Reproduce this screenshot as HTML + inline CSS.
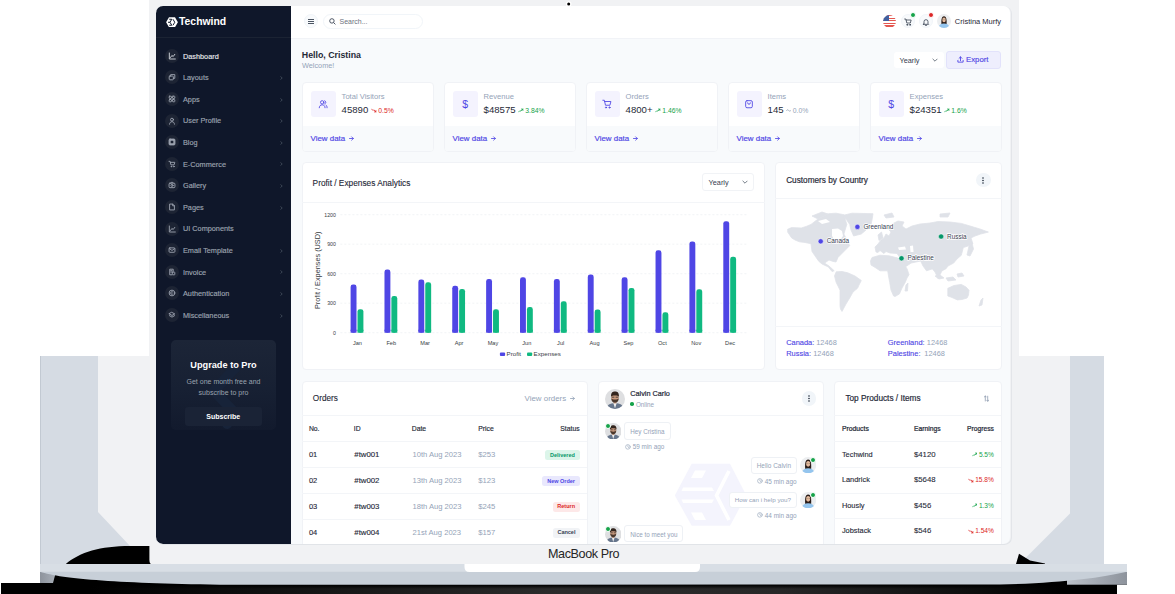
<!DOCTYPE html>
<html><head><meta charset="utf-8"><style>
*{box-sizing:border-box;margin:0;padding:0}
html,body{width:1175px;height:594px;overflow:hidden;background:#fff;font-family:"Liberation Sans",sans-serif}
.abs{position:absolute}
.t{white-space:nowrap}
svg{display:block}
#frame{position:absolute;left:0;top:0}
#screen{position:absolute;left:156px;top:6px;width:854px;height:538px;border-radius:7px;overflow:hidden;background:#f8fafc}
#edge{position:absolute;left:156px;top:6px;width:854.5px;height:538px;border-radius:7px;box-shadow:0.6px 0.7px 0 0.3px #e1e4e8;pointer-events:none}
#ct{position:absolute;left:-156px;top:-6px;width:1175px;height:594px}
.card{position:absolute;background:#fff;border:1px solid #f0f2f6;border-radius:4px;overflow:hidden}
.circ{position:absolute;border-radius:50%}
</style></head><body>
<svg id="frame" width="1175" height="594" viewBox="0 0 1175 594">
  <defs>
   <linearGradient id="gl" x1="0" x2="1" y1="0" y2="0"><stop offset="0" stop-color="#8d939c"/><stop offset="1" stop-color="#a9afb8"/></linearGradient>
   <linearGradient id="gr" x1="0" x2="1" y1="0" y2="0"><stop offset="0" stop-color="#bcc2ca"/><stop offset="0.5" stop-color="#a4aab3"/><stop offset="1" stop-color="#8d939c"/></linearGradient>
   <linearGradient id="gb" x1="0" x2="1" y1="0" y2="0"><stop offset="0.08" stop-color="#2a2a2a" stop-opacity="0"/><stop offset="0.5" stop-color="#2b2b2b"/><stop offset="0.7" stop-color="#272727"/><stop offset="0.95" stop-color="#2a2a2a" stop-opacity="0"/></linearGradient>
   <linearGradient id="gv" x1="0" x2="0" y1="0" y2="1"><stop offset="0" stop-color="#000"/><stop offset="1" stop-color="#000" stop-opacity="0"/></linearGradient>
  </defs>
  <rect x="40" y="356" width="1064" height="208" fill="#d5dbe3"/>
  <rect x="40" y="356" width="1" height="216" fill="#c2c9d2"/>
  <rect x="149" y="0" width="870" height="564" fill="#f1f2f4"/>
  <polygon points="98,356 1070,356 1070,513.5 1020,563.5 1016,564 149,564 149,546 130,546 98,512" fill="#f1f2f4"/>
  <path d="M130,546 L149.4,546 L149.4,560 Q149.6,564 151.3,564 L65.8,564 C80,552 100,546 130,546 Z" fill="#000"/>
  <polygon points="1016,564 1019,553.8 1030,560.5 1045,563.4 1045,564" fill="#000"/>
  <rect x="1" y="583" width="1116" height="11" fill="#000"/>
  <rect x="1" y="585" width="1116" height="9" fill="url(#gb)"/>
  <rect x="1" y="585" width="1116" height="4" fill="url(#gv)"/>
  <rect x="40" y="571" width="1087" height="13.7" fill="#000"/>
  <polygon points="40,571.7 56,571.7 53,583 40,583" fill="url(#gl)"/>
  <rect x="1067" y="571.7" width="60" height="13" fill="url(#gr)"/>
  <rect x="40" y="564" width="1087" height="8" fill="#d8dee5"/>
  <path d="M40,571.7 L1127,571.7 C1100,578 1060,583 1000,584.5 L230,584.7 C120,583.5 62,579 40,571.7 Z" fill="#c7cfd8"/>
  <path d="M464.5,564 L700,564 L700,567 Q700,572 695,572 L469.5,572 Q464.5,572 464.5,567 Z" fill="#fff"/>
  <circle cx="568.7" cy="4" r="2.8" fill="#fff"/><circle cx="568.7" cy="4" r="1.5" fill="#000"/>
  <text x="583.6" y="557.8" font-family="Liberation Sans" font-size="12.6" letter-spacing="-0.4" fill="#262626" text-anchor="middle">MacBook Pro</text>
</svg>
<div id="screen"><div id="ct"><div class="abs" style="left:156px;top:6px;width:135px;height:538px;background:#0f172a"></div>
<svg class="abs" style="left:165.5px;top:16.8px" width="12" height="10.5" viewBox="0 0 24 21">
<polygon points="6,0.5 18,0.5 23.8,10.5 18,20.5 6,20.5 0.2,10.5" fill="#fff"/>
<path d="M6.5 4.5h5L8 10.5l3.5 6h-5M14 4.5l3.5 6-3.5 6M4 10.5h4" stroke="#10182a" stroke-width="2" fill="none"/></svg>
<div class="abs t" style="left:179px;top:15.10px;line-height:13px;font-size:10.4px;color:#fff;font-weight:bold;">Techwind</div>
<div class="abs" style="left:156px;top:37px;width:135px;height:1px;background:#1b2333"></div>
<div class="circ" style="left:165.2px;top:48.8px;width:14px;height:14px;background:#1d2434"></div>
<svg class="abs" style="left:168.2px;top:51.8px" width="8" height="8" viewBox="0 0 12 12" fill="none" stroke="#d1d5db" color="#d1d5db" stroke-width="1.4" stroke-linecap="round" stroke-linejoin="round"><path d="M2 1.5v9h9"/><path d="M3.8 8.2l2-3 2 1.6 2.4-3.3"/></svg>
<div class="abs t" style="left:183px;top:50.60px;line-height:12px;font-size:7.3px;color:#e5e7eb;-webkit-text-stroke:0.15px #e5e7eb;">Dashboard</div>
<div class="circ" style="left:165.2px;top:70.4px;width:14px;height:14px;background:#1d2434"></div>
<svg class="abs" style="left:168.2px;top:73.4px" width="8" height="8" viewBox="0 0 12 12" fill="none" stroke="#9ca3af" color="#9ca3af" stroke-width="1.4" stroke-linecap="round" stroke-linejoin="round"><rect x="1.8" y="4.6" width="6.2" height="5.6" rx="1"/><path d="M4 4.6V2.4h6.2v5.6H8"/></svg>
<div class="abs t" style="left:183px;top:72.20px;line-height:12px;font-size:7.3px;color:#9ca3af;-webkit-text-stroke:0.15px #9ca3af;">Layouts</div>
<svg class="abs" style="left:280px;top:75.9px" width="3" height="4" viewBox="0 0 3 4" fill="none" stroke="#4b5563" stroke-width="0.8"><path d="M0.6 0.4L2.2 2 0.6 3.6"/></svg>
<div class="circ" style="left:165.2px;top:92.0px;width:14px;height:14px;background:#1d2434"></div>
<svg class="abs" style="left:168.2px;top:95.0px" width="8" height="8" viewBox="0 0 12 12" fill="none" stroke="#9ca3af" color="#9ca3af" stroke-width="1.4" stroke-linecap="round" stroke-linejoin="round"><rect x="1.8" y="1.8" width="3.4" height="3.4" rx=".7"/><rect x="6.8" y="1.8" width="3.4" height="3.4" rx=".7"/><rect x="1.8" y="6.8" width="3.4" height="3.4" rx=".7"/><rect x="6.8" y="6.8" width="3.4" height="3.4" rx=".7"/></svg>
<div class="abs t" style="left:183px;top:93.80px;line-height:12px;font-size:7.3px;color:#9ca3af;-webkit-text-stroke:0.15px #9ca3af;">Apps</div>
<svg class="abs" style="left:280px;top:97.5px" width="3" height="4" viewBox="0 0 3 4" fill="none" stroke="#4b5563" stroke-width="0.8"><path d="M0.6 0.4L2.2 2 0.6 3.6"/></svg>
<div class="circ" style="left:165.2px;top:113.6px;width:14px;height:14px;background:#1d2434"></div>
<svg class="abs" style="left:168.2px;top:116.6px" width="8" height="8" viewBox="0 0 12 12" fill="none" stroke="#9ca3af" color="#9ca3af" stroke-width="1.4" stroke-linecap="round" stroke-linejoin="round"><circle cx="6" cy="4" r="2.2"/><path d="M2.3 10.8c0-2.2 1.6-3.7 3.7-3.7s3.7 1.5 3.7 3.7"/></svg>
<div class="abs t" style="left:183px;top:115.40px;line-height:12px;font-size:7.3px;color:#9ca3af;-webkit-text-stroke:0.15px #9ca3af;">User Profile</div>
<svg class="abs" style="left:280px;top:119.1px" width="3" height="4" viewBox="0 0 3 4" fill="none" stroke="#4b5563" stroke-width="0.8"><path d="M0.6 0.4L2.2 2 0.6 3.6"/></svg>
<div class="circ" style="left:165.2px;top:135.2px;width:14px;height:14px;background:#1d2434"></div>
<svg class="abs" style="left:168.2px;top:138.2px" width="8" height="8" viewBox="0 0 12 12" fill="none" stroke="#9ca3af" color="#9ca3af" stroke-width="1.4" stroke-linecap="round" stroke-linejoin="round"><rect x="1.6" y="1.6" width="8.8" height="8.8" rx="1.4" fill="currentColor"/><rect x="4" y="4" width="4" height="4" rx=".4" fill="#1d2434" stroke="none"/></svg>
<div class="abs t" style="left:183px;top:137.00px;line-height:12px;font-size:7.3px;color:#9ca3af;-webkit-text-stroke:0.15px #9ca3af;">Blog</div>
<svg class="abs" style="left:280px;top:140.7px" width="3" height="4" viewBox="0 0 3 4" fill="none" stroke="#4b5563" stroke-width="0.8"><path d="M0.6 0.4L2.2 2 0.6 3.6"/></svg>
<div class="circ" style="left:165.2px;top:156.8px;width:14px;height:14px;background:#1d2434"></div>
<svg class="abs" style="left:168.2px;top:159.8px" width="8" height="8" viewBox="0 0 12 12" fill="none" stroke="#9ca3af" color="#9ca3af" stroke-width="1.4" stroke-linecap="round" stroke-linejoin="round"><path d="M1.5 2h1.6l1.3 5.3h4.7l1.1-3.8H3.6"/><circle cx="5" cy="9.8" r=".6"/><circle cx="8.8" cy="9.8" r=".6"/></svg>
<div class="abs t" style="left:183px;top:158.60px;line-height:12px;font-size:7.3px;color:#9ca3af;-webkit-text-stroke:0.15px #9ca3af;">E-Commerce</div>
<svg class="abs" style="left:280px;top:162.3px" width="3" height="4" viewBox="0 0 3 4" fill="none" stroke="#4b5563" stroke-width="0.8"><path d="M0.6 0.4L2.2 2 0.6 3.6"/></svg>
<div class="circ" style="left:165.2px;top:178.4px;width:14px;height:14px;background:#1d2434"></div>
<svg class="abs" style="left:168.2px;top:181.4px" width="8" height="8" viewBox="0 0 12 12" fill="none" stroke="#9ca3af" color="#9ca3af" stroke-width="1.4" stroke-linecap="round" stroke-linejoin="round"><rect x="1.6" y="3.2" width="8.8" height="6.8" rx="1.4"/><circle cx="6" cy="6.6" r="1.6"/><path d="M4.5 3.2l.6-1.2h1.8l.6 1.2"/></svg>
<div class="abs t" style="left:183px;top:180.20px;line-height:12px;font-size:7.3px;color:#9ca3af;-webkit-text-stroke:0.15px #9ca3af;">Gallery</div>
<svg class="abs" style="left:280px;top:183.9px" width="3" height="4" viewBox="0 0 3 4" fill="none" stroke="#4b5563" stroke-width="0.8"><path d="M0.6 0.4L2.2 2 0.6 3.6"/></svg>
<div class="circ" style="left:165.2px;top:200.0px;width:14px;height:14px;background:#1d2434"></div>
<svg class="abs" style="left:168.2px;top:203.0px" width="8" height="8" viewBox="0 0 12 12" fill="none" stroke="#9ca3af" color="#9ca3af" stroke-width="1.4" stroke-linecap="round" stroke-linejoin="round"><path d="M3 1.6h4l2.6 2.6v6.2H3z"/><path d="M7 1.6v2.6h2.6"/></svg>
<div class="abs t" style="left:183px;top:201.80px;line-height:12px;font-size:7.3px;color:#9ca3af;-webkit-text-stroke:0.15px #9ca3af;">Pages</div>
<svg class="abs" style="left:280px;top:205.5px" width="3" height="4" viewBox="0 0 3 4" fill="none" stroke="#4b5563" stroke-width="0.8"><path d="M0.6 0.4L2.2 2 0.6 3.6"/></svg>
<div class="circ" style="left:165.2px;top:221.6px;width:14px;height:14px;background:#1d2434"></div>
<svg class="abs" style="left:168.2px;top:224.6px" width="8" height="8" viewBox="0 0 12 12" fill="none" stroke="#9ca3af" color="#9ca3af" stroke-width="1.4" stroke-linecap="round" stroke-linejoin="round"><path d="M2 1.5v9h9"/><path d="M3.8 8.2l2-3 2 1.6 2.4-3.3"/></svg>
<div class="abs t" style="left:183px;top:223.40px;line-height:12px;font-size:7.3px;color:#9ca3af;-webkit-text-stroke:0.15px #9ca3af;">UI Components</div>
<div class="circ" style="left:165.2px;top:243.2px;width:14px;height:14px;background:#1d2434"></div>
<svg class="abs" style="left:168.2px;top:246.2px" width="8" height="8" viewBox="0 0 12 12" fill="none" stroke="#9ca3af" color="#9ca3af" stroke-width="1.4" stroke-linecap="round" stroke-linejoin="round"><rect x="1.6" y="2.8" width="8.8" height="6.6" rx="1.2"/><path d="M2.2 4l3.8 2.7 3.8-2.7"/></svg>
<div class="abs t" style="left:183px;top:245.00px;line-height:12px;font-size:7.3px;color:#9ca3af;-webkit-text-stroke:0.15px #9ca3af;">Email Template</div>
<svg class="abs" style="left:280px;top:248.7px" width="3" height="4" viewBox="0 0 3 4" fill="none" stroke="#4b5563" stroke-width="0.8"><path d="M0.6 0.4L2.2 2 0.6 3.6"/></svg>
<div class="circ" style="left:165.2px;top:264.8px;width:14px;height:14px;background:#1d2434"></div>
<svg class="abs" style="left:168.2px;top:267.8px" width="8" height="8" viewBox="0 0 12 12" fill="none" stroke="#9ca3af" color="#9ca3af" stroke-width="1.4" stroke-linecap="round" stroke-linejoin="round"><path d="M7.8 5V1.8H2.6v8.4h3"/><rect x="6.4" y="6.2" width="3.8" height="4" rx=".6"/><path d="M4 4h2M4 6h1.5"/></svg>
<div class="abs t" style="left:183px;top:266.60px;line-height:12px;font-size:7.3px;color:#9ca3af;-webkit-text-stroke:0.15px #9ca3af;">Invoice</div>
<svg class="abs" style="left:280px;top:270.3px" width="3" height="4" viewBox="0 0 3 4" fill="none" stroke="#4b5563" stroke-width="0.8"><path d="M0.6 0.4L2.2 2 0.6 3.6"/></svg>
<div class="circ" style="left:165.2px;top:286.4px;width:14px;height:14px;background:#1d2434"></div>
<svg class="abs" style="left:168.2px;top:289.4px" width="8" height="8" viewBox="0 0 12 12" fill="none" stroke="#9ca3af" color="#9ca3af" stroke-width="1.4" stroke-linecap="round" stroke-linejoin="round"><circle cx="6" cy="6" r="4.3"/><path d="M7.4 4.6a2 2 0 1 0 0 2.8"/></svg>
<div class="abs t" style="left:183px;top:288.20px;line-height:12px;font-size:7.3px;color:#9ca3af;-webkit-text-stroke:0.15px #9ca3af;">Authentication</div>
<svg class="abs" style="left:280px;top:291.9px" width="3" height="4" viewBox="0 0 3 4" fill="none" stroke="#4b5563" stroke-width="0.8"><path d="M0.6 0.4L2.2 2 0.6 3.6"/></svg>
<div class="circ" style="left:165.2px;top:308.0px;width:14px;height:14px;background:#1d2434"></div>
<svg class="abs" style="left:168.2px;top:311.0px" width="8" height="8" viewBox="0 0 12 12" fill="none" stroke="#9ca3af" color="#9ca3af" stroke-width="1.4" stroke-linecap="round" stroke-linejoin="round"><path d="M6 2.2l4.2 2.2L6 6.6 1.8 4.4z"/><path d="M2.2 7l3.8 2.2L9.8 7"/></svg>
<div class="abs t" style="left:183px;top:309.80px;line-height:12px;font-size:7.3px;color:#9ca3af;-webkit-text-stroke:0.15px #9ca3af;">Miscellaneous</div>
<svg class="abs" style="left:280px;top:313.5px" width="3" height="4" viewBox="0 0 3 4" fill="none" stroke="#4b5563" stroke-width="0.8"><path d="M0.6 0.4L2.2 2 0.6 3.6"/></svg>
<div class="abs" style="left:170.7px;top:340px;width:105.6px;height:90px;border-radius:5px;background:linear-gradient(180deg,#1c2537 0%,#172033 55%,#121a2d 100%)"></div>
<svg class="abs" style="left:0;top:0" width="1175" height="594" viewBox="0 0 1175 594"><path d="M236 367 L214 391 L235 413 L227 424" stroke="#172339" stroke-width="10" fill="none" stroke-linejoin="round" stroke-linecap="round"/></svg>
<div class="abs t" style="left:170.5px;width:106px;text-align:center;top:359.00px;line-height:12px;font-size:9.2px;color:#fff;font-weight:bold;">Upgrade to Pro</div>
<div class="abs t" style="left:170.5px;width:106px;text-align:center;top:376.60px;line-height:10px;font-size:7.0px;color:#9ca3af;">Get one month free and</div>
<div class="abs t" style="left:170.5px;width:106px;text-align:center;top:387.60px;line-height:10px;font-size:7.0px;color:#9ca3af;">subscribe to pro</div>
<div class="abs" style="left:184.6px;top:406.9px;width:77.4px;height:19px;border-radius:3px;background:#1a2336"></div>
<div class="abs t" style="left:184.3px;width:78px;text-align:center;top:412.10px;line-height:10px;font-size:7.0px;color:#fff;font-weight:bold;">Subscribe</div>
<div class="abs" style="left:291px;top:6px;width:719px;height:33px;background:#fff;border-bottom:1px solid #f1f3f7"></div>
<div class="circ" style="left:304px;top:14.4px;width:14px;height:14px;background:#f8fafc;border:1px solid #f1f5f9"></div>
<div class="abs" style="left:308.1px;top:19.2px;width:5.9px;height:1px;background:#4b5563"></div><div class="abs" style="left:308.1px;top:21px;width:5.9px;height:1px;background:#4b5563"></div><div class="abs" style="left:308.1px;top:22.9px;width:5.9px;height:1px;background:#4b5563"></div>
<div class="abs" style="left:323.4px;top:14.3px;width:100px;height:14.6px;border-radius:8px;border:1px solid #f1f5f9;background:#fff"></div>
<svg class="abs" style="left:328.5px;top:18px" width="7" height="7" viewBox="0 0 12 12" fill="none" stroke="#374151" stroke-width="1.5"><circle cx="5" cy="5" r="3.8"/><path d="M8 8l3 3"/></svg>
<div class="abs t" style="left:339.5px;top:16.60px;line-height:10px;font-size:7.0px;color:#6b7280;">Search...</div>
<div class="circ" style="left:882.8px;top:14.8px;width:13px;height:13px;overflow:hidden;background:repeating-linear-gradient(180deg,#e4564f 0 1.3px,#fff 1.3px 2.6px)"><div style="position:absolute;left:0;top:0;width:6.5px;height:6px;background:#41609f"></div></div>
<div class="circ" style="left:901px;top:14.4px;width:14px;height:14px;background:#f8fafc;border:1px solid #f1f5f9"></div>
<div class="circ" style="left:910px;top:12px;width:6px;height:6px;background:#16a34a;border:1px solid #fff"></div>
<div class="circ" style="left:918.5px;top:14.4px;width:14px;height:14px;background:#f8fafc;border:1px solid #f1f5f9"></div>
<div class="circ" style="left:928px;top:12px;width:6px;height:6px;background:#dc2626;border:1px solid #fff"></div>
<svg class="abs" style="left:904px;top:17.6px" width="8" height="8" viewBox="0 0 12 12" fill="none" stroke="#374151" stroke-width="1.2" stroke-linecap="round" stroke-linejoin="round"><path d="M1 1.5h1.8l1.4 6h5.3l1.2-4.5H3.2"/><circle cx="4.8" cy="10.2" r=".8"/><circle cx="9" cy="10.2" r=".8"/></svg>
<svg class="abs" style="left:921.5px;top:17.6px" width="8" height="8" viewBox="0 0 12 12" fill="none" stroke="#374151" stroke-width="1.2" stroke-linecap="round"><path d="M3 8.5V5.5a3 3 0 0 1 6 0v3l1 1H2z"/><path d="M5 11h2"/></svg>
<svg class="abs" style="left:937.0px;top:14.399999999999999px" width="14" height="14" viewBox="0 0 14 14">
<defs><clipPath id="cf94421"><circle cx="7" cy="7" r="7"/></clipPath></defs>
<g clip-path="url(#cf94421)"><rect width="14" height="14" fill="#eceef0"/>
<path d="M4.5 11.2 C4.1 6.2 4.4 2.2 7 2.2 C9.6 2.2 9.9 6.2 9.5 11.2 Z" fill="#2a1c17"/>
<ellipse cx="7" cy="5.9" rx="1.75" ry="2.4" fill="#e3b99d"/>
<path d="M5.5 5.6h1.1M7.4 5.6h1.1" stroke="#553" stroke-width="0.35"/>
<path d="M1.3 14 C1.8 10.9 4 9.6 7 9.6 C10 9.6 12.2 10.9 12.7 14 Z" fill="#94c5ee"/>
</g></svg>
<div class="abs t" style="left:954.8px;top:16.60px;line-height:10px;font-size:7.5px;color:#1f2937;">Cristina Murfy</div>
<div class="abs t" style="left:301.8px;top:48.60px;line-height:12px;font-size:8.8px;color:#1f2937;font-weight:bold;">Hello, Cristina</div>
<div class="abs t" style="left:302px;top:61.30px;line-height:10px;font-size:7.3px;color:#94a3b8;">Welcome!</div>
<div class="abs" style="left:894px;top:52px;width:50px;height:16px;background:#fff;border-radius:3px"></div>
<div class="abs t" style="left:899.5px;top:55.90px;line-height:10px;font-size:7.3px;color:#374151;">Yearly</div>
<svg class="abs" style="left:932px;top:58.2px" width="6" height="4" viewBox="0 0 6 4" fill="none" stroke="#4b5563" stroke-width="0.75"><path d="M0.6 0.8L3 3.2 5.4 0.8"/></svg>
<div class="abs" style="left:946px;top:51px;width:55px;height:17.5px;background:#eeeefd;border:1px solid #e2e2fb;border-radius:3px"></div>
<svg class="abs" style="left:957px;top:56px" width="7" height="7" viewBox="0 0 12 12" fill="none" stroke="#4f46e5" stroke-width="1.5" stroke-linecap="round" stroke-linejoin="round"><path d="M6 8V1.5M3.5 4L6 1.5 8.5 4M1.5 7.5v3h9v-3"/></svg>
<div class="abs t" style="left:966px;top:55.40px;line-height:10px;font-size:7.8px;color:#4f46e5;-webkit-text-stroke:0.15px #4f46e5;">Export</div>
<div class="card" style="left:302px;top:82px;width:132px;height:69.5px"><div class="abs" style="left:0;top:43px;width:132px;height:27px;background:#f8fafc"></div></div>
<div class="abs" style="left:310.6px;top:91.4px;width:25.2px;height:25.2px;border-radius:3px;background:#f4f3fe"></div>
<svg class="abs" style="left:318.2px;top:99px" width="10" height="10" viewBox="0 0 12 12" fill="none" stroke="#4f46e5" stroke-width="1.05" stroke-linecap="round" stroke-linejoin="round"><circle cx="5" cy="4" r="2"/><path d="M1.5 10.5c0-2.2 1.5-3.5 3.5-3.5s3.5 1.3 3.5 3.5"/><path d="M8 2.1a2 2 0 0 1 0 3.8M9.6 7.3c.9.6 1.3 1.7 1.3 3.2"/></svg>
<div class="abs t" style="left:341.6px;top:92.20px;line-height:10px;font-size:7.6px;color:#94a3b8;">Total Visitors</div>
<div class="abs t" style="left:341.6px;top:104.30px;line-height:12px;font-size:9.6px;color:#1f2937;">45890</div>
<svg class="abs" style="left:371.1px;top:108px" width="5.5" height="5" viewBox="0 0 7 7" fill="none" stroke="#dc2626" stroke-width="1.1" stroke-linecap="round" stroke-linejoin="round"><path d="M0.5 1.5l2 2 1-1 3 3M6.5 3.5v2H4.5"/></svg>
<div class="abs t" style="left:378.3px;top:105.50px;line-height:10px;font-size:6.8px;color:#dc2626;">0.5%</div>
<div class="abs t" style="left:310.6px;top:133.80px;line-height:10px;font-size:7.9px;color:#4f46e5;-webkit-text-stroke:0.18px #4f46e5;">View data</div>
<svg class="abs" style="left:349px;top:136.3px" width="5" height="5" viewBox="0 0 6 6" fill="none" stroke="#4f46e5" stroke-width="1" stroke-linecap="round" stroke-linejoin="round"><path d="M0.6 3h4.6M3.2 1l2 2-2 2"/></svg>
<div class="card" style="left:444px;top:82px;width:132px;height:69.5px"><div class="abs" style="left:0;top:43px;width:132px;height:27px;background:#f8fafc"></div></div>
<div class="abs" style="left:452.6px;top:91.4px;width:25.2px;height:25.2px;border-radius:3px;background:#f4f3fe"></div>
<div class="abs t" style="left:455.2px;width:20px;text-align:center;top:98.40px;line-height:12px;font-size:10.5px;color:#4f46e5;">$</div>
<div class="abs t" style="left:483.6px;top:92.20px;line-height:10px;font-size:7.6px;color:#94a3b8;">Revenue</div>
<div class="abs t" style="left:483.6px;top:104.30px;line-height:12px;font-size:9.6px;color:#1f2937;">$48575</div>
<svg class="abs" style="left:518.1px;top:108px" width="5.5" height="5" viewBox="0 0 7 7" fill="none" stroke="#16a34a" stroke-width="1.1" stroke-linecap="round" stroke-linejoin="round"><path d="M0.5 5.5l2-2 1 1 3-3M6.5 3.5v-2H4.5"/></svg>
<div class="abs t" style="left:525.3000000000001px;top:105.50px;line-height:10px;font-size:6.8px;color:#16a34a;">3.84%</div>
<div class="abs t" style="left:452.6px;top:133.80px;line-height:10px;font-size:7.9px;color:#4f46e5;-webkit-text-stroke:0.18px #4f46e5;">View data</div>
<svg class="abs" style="left:491px;top:136.3px" width="5" height="5" viewBox="0 0 6 6" fill="none" stroke="#4f46e5" stroke-width="1" stroke-linecap="round" stroke-linejoin="round"><path d="M0.6 3h4.6M3.2 1l2 2-2 2"/></svg>
<div class="card" style="left:586px;top:82px;width:132px;height:69.5px"><div class="abs" style="left:0;top:43px;width:132px;height:27px;background:#f8fafc"></div></div>
<div class="abs" style="left:594.6px;top:91.4px;width:25.2px;height:25.2px;border-radius:3px;background:#f4f3fe"></div>
<svg class="abs" style="left:602.2px;top:99px" width="10" height="10" viewBox="0 0 12 12" fill="none" stroke="#4f46e5" stroke-width="1.05" stroke-linecap="round" stroke-linejoin="round"><path d="M1 1.5h1.8l1.4 6h5.3l1.2-4.5H3.2"/><circle cx="4.8" cy="10.2" r=".7"/><circle cx="9" cy="10.2" r=".7"/></svg>
<div class="abs t" style="left:625.6px;top:92.20px;line-height:10px;font-size:7.6px;color:#94a3b8;">Orders</div>
<div class="abs t" style="left:625.6px;top:104.30px;line-height:12px;font-size:9.6px;color:#1f2937;">4800+</div>
<svg class="abs" style="left:655.1px;top:108px" width="5.5" height="5" viewBox="0 0 7 7" fill="none" stroke="#16a34a" stroke-width="1.1" stroke-linecap="round" stroke-linejoin="round"><path d="M0.5 5.5l2-2 1 1 3-3M6.5 3.5v-2H4.5"/></svg>
<div class="abs t" style="left:662.3000000000001px;top:105.50px;line-height:10px;font-size:6.8px;color:#16a34a;">1.46%</div>
<div class="abs t" style="left:594.6px;top:133.80px;line-height:10px;font-size:7.9px;color:#4f46e5;-webkit-text-stroke:0.18px #4f46e5;">View data</div>
<svg class="abs" style="left:633px;top:136.3px" width="5" height="5" viewBox="0 0 6 6" fill="none" stroke="#4f46e5" stroke-width="1" stroke-linecap="round" stroke-linejoin="round"><path d="M0.6 3h4.6M3.2 1l2 2-2 2"/></svg>
<div class="card" style="left:728px;top:82px;width:132px;height:69.5px"><div class="abs" style="left:0;top:43px;width:132px;height:27px;background:#f8fafc"></div></div>
<div class="abs" style="left:736.6px;top:91.4px;width:25.2px;height:25.2px;border-radius:3px;background:#f4f3fe"></div>
<svg class="abs" style="left:744.2px;top:99px" width="10" height="10" viewBox="0 0 12 12" fill="none" stroke="#4f46e5" stroke-width="1.05" stroke-linecap="round" stroke-linejoin="round"><rect x="2" y="2" width="8" height="8.5" rx="1.6"/><path d="M4.3 4.6a1.7 1.7 0 0 0 3.4 0"/></svg>
<div class="abs t" style="left:767.6px;top:92.20px;line-height:10px;font-size:7.6px;color:#94a3b8;">Items</div>
<div class="abs t" style="left:767.6px;top:104.30px;line-height:12px;font-size:9.6px;color:#1f2937;">145</div>
<svg class="abs" style="left:785.6px;top:108px" width="5.5" height="5" viewBox="0 0 7 7" fill="none" stroke="#94a3b8" stroke-width="1.1" stroke-linecap="round" stroke-linejoin="round"><path d="M0.5 3.5c1-1.5 2-1.5 3 0s2 1.5 3 0"/></svg>
<div class="abs t" style="left:792.8000000000001px;top:105.50px;line-height:10px;font-size:6.8px;color:#94a3b8;">0.0%</div>
<div class="abs t" style="left:736.6px;top:133.80px;line-height:10px;font-size:7.9px;color:#4f46e5;-webkit-text-stroke:0.18px #4f46e5;">View data</div>
<svg class="abs" style="left:775px;top:136.3px" width="5" height="5" viewBox="0 0 6 6" fill="none" stroke="#4f46e5" stroke-width="1" stroke-linecap="round" stroke-linejoin="round"><path d="M0.6 3h4.6M3.2 1l2 2-2 2"/></svg>
<div class="card" style="left:870px;top:82px;width:132px;height:69.5px"><div class="abs" style="left:0;top:43px;width:132px;height:27px;background:#f8fafc"></div></div>
<div class="abs" style="left:878.6px;top:91.4px;width:25.2px;height:25.2px;border-radius:3px;background:#f4f3fe"></div>
<div class="abs t" style="left:881.2px;width:20px;text-align:center;top:98.40px;line-height:12px;font-size:10.5px;color:#4f46e5;">$</div>
<div class="abs t" style="left:909.6px;top:92.20px;line-height:10px;font-size:7.6px;color:#94a3b8;">Expenses</div>
<div class="abs t" style="left:909.6px;top:104.30px;line-height:12px;font-size:9.6px;color:#1f2937;">$24351</div>
<svg class="abs" style="left:944.1px;top:108px" width="5.5" height="5" viewBox="0 0 7 7" fill="none" stroke="#16a34a" stroke-width="1.1" stroke-linecap="round" stroke-linejoin="round"><path d="M0.5 5.5l2-2 1 1 3-3M6.5 3.5v-2H4.5"/></svg>
<div class="abs t" style="left:951.3000000000001px;top:105.50px;line-height:10px;font-size:6.8px;color:#16a34a;">1.6%</div>
<div class="abs t" style="left:878.6px;top:133.80px;line-height:10px;font-size:7.9px;color:#4f46e5;-webkit-text-stroke:0.18px #4f46e5;">View data</div>
<svg class="abs" style="left:917px;top:136.3px" width="5" height="5" viewBox="0 0 6 6" fill="none" stroke="#4f46e5" stroke-width="1" stroke-linecap="round" stroke-linejoin="round"><path d="M0.6 3h4.6M3.2 1l2 2-2 2"/></svg>
<div class="card" style="left:302px;top:161.8px;width:463px;height:208.6px"></div>
<div class="abs t" style="left:312.6px;top:176.70px;line-height:12px;font-size:8.3px;color:#1f2937;-webkit-text-stroke:0.12px #1f2937;">Profit / Expenses Analytics</div>
<div class="abs" style="left:302px;top:202px;width:463px;height:1px;background:#f3f5f8"></div>
<div class="abs" style="left:702.3px;top:173.4px;width:52px;height:17.6px;border:1px solid #f1f3f6;border-radius:3px;background:#fff"></div>
<div class="abs t" style="left:708.6px;top:178.00px;line-height:10px;font-size:7.3px;color:#374151;">Yearly</div>
<svg class="abs" style="left:741.8px;top:180.2px" width="6" height="4" viewBox="0 0 6 4" fill="none" stroke="#4b5563" stroke-width="0.75"><path d="M0.6 0.8L3 3.2 5.4 0.8"/></svg>
<svg class="abs" style="left:0;top:0" width="1175" height="594" viewBox="0 0 1175 594">
<line x1="340.4" y1="332.70" x2="747.6" y2="332.70" stroke="#e9ecf0" stroke-width="0.6" stroke-dasharray="2 2"/>
<text x="335.8" y="334.60" font-family="Liberation Sans" font-size="5.2" fill="#373d3f" text-anchor="end">0</text>
<line x1="340.4" y1="303.20" x2="747.6" y2="303.20" stroke="#e9ecf0" stroke-width="0.6" stroke-dasharray="2 2"/>
<text x="335.8" y="305.10" font-family="Liberation Sans" font-size="5.2" fill="#373d3f" text-anchor="end">300</text>
<line x1="340.4" y1="273.70" x2="747.6" y2="273.70" stroke="#e9ecf0" stroke-width="0.6" stroke-dasharray="2 2"/>
<text x="335.8" y="275.60" font-family="Liberation Sans" font-size="5.2" fill="#373d3f" text-anchor="end">600</text>
<line x1="340.4" y1="244.20" x2="747.6" y2="244.20" stroke="#e9ecf0" stroke-width="0.6" stroke-dasharray="2 2"/>
<text x="335.8" y="246.10" font-family="Liberation Sans" font-size="5.2" fill="#373d3f" text-anchor="end">900</text>
<line x1="340.4" y1="214.70" x2="747.6" y2="214.70" stroke="#e9ecf0" stroke-width="0.6" stroke-dasharray="2 2"/>
<text x="335.8" y="216.60" font-family="Liberation Sans" font-size="5.2" fill="#373d3f" text-anchor="end">1200</text>
<rect x="350.60" y="284.52" width="5.9" height="48.18" rx="2.4" fill="#4f46e5"/>
<rect x="350.60" y="329.70" width="5.9" height="3" fill="#4f46e5"/>
<rect x="357.50" y="309.20" width="5.9" height="23.50" rx="2.4" fill="#10b981"/>
<rect x="357.50" y="329.70" width="5.9" height="3" fill="#10b981"/>
<text x="357.40" y="344.60" font-family="Liberation Sans" font-size="5.6" fill="#373d3f" text-anchor="middle">Jan</text>
<rect x="384.48" y="269.57" width="5.9" height="63.13" rx="2.4" fill="#4f46e5"/>
<rect x="384.48" y="329.70" width="5.9" height="3" fill="#4f46e5"/>
<rect x="391.38" y="296.02" width="5.9" height="36.68" rx="2.4" fill="#10b981"/>
<rect x="391.38" y="329.70" width="5.9" height="3" fill="#10b981"/>
<text x="391.28" y="344.60" font-family="Liberation Sans" font-size="5.6" fill="#373d3f" text-anchor="middle">Feb</text>
<rect x="418.36" y="279.60" width="5.9" height="53.10" rx="2.4" fill="#4f46e5"/>
<rect x="418.36" y="329.70" width="5.9" height="3" fill="#4f46e5"/>
<rect x="425.26" y="282.35" width="5.9" height="50.35" rx="2.4" fill="#10b981"/>
<rect x="425.26" y="329.70" width="5.9" height="3" fill="#10b981"/>
<text x="425.16" y="344.60" font-family="Liberation Sans" font-size="5.6" fill="#373d3f" text-anchor="middle">Mar</text>
<rect x="452.25" y="285.80" width="5.9" height="46.90" rx="2.4" fill="#4f46e5"/>
<rect x="452.25" y="329.70" width="5.9" height="3" fill="#4f46e5"/>
<rect x="459.15" y="288.94" width="5.9" height="43.76" rx="2.4" fill="#10b981"/>
<rect x="459.15" y="329.70" width="5.9" height="3" fill="#10b981"/>
<text x="459.05" y="344.60" font-family="Liberation Sans" font-size="5.6" fill="#373d3f" text-anchor="middle">Apr</text>
<rect x="486.13" y="279.01" width="5.9" height="53.69" rx="2.4" fill="#4f46e5"/>
<rect x="486.13" y="329.70" width="5.9" height="3" fill="#4f46e5"/>
<rect x="493.03" y="309.20" width="5.9" height="23.50" rx="2.4" fill="#10b981"/>
<rect x="493.03" y="329.70" width="5.9" height="3" fill="#10b981"/>
<text x="492.93" y="344.60" font-family="Liberation Sans" font-size="5.6" fill="#373d3f" text-anchor="middle">May</text>
<rect x="520.01" y="277.24" width="5.9" height="55.46" rx="2.4" fill="#4f46e5"/>
<rect x="520.01" y="329.70" width="5.9" height="3" fill="#4f46e5"/>
<rect x="526.91" y="307.03" width="5.9" height="25.67" rx="2.4" fill="#10b981"/>
<rect x="526.91" y="329.70" width="5.9" height="3" fill="#10b981"/>
<text x="526.81" y="344.60" font-family="Liberation Sans" font-size="5.6" fill="#373d3f" text-anchor="middle">Jun</text>
<rect x="553.89" y="279.01" width="5.9" height="53.69" rx="2.4" fill="#4f46e5"/>
<rect x="553.89" y="329.70" width="5.9" height="3" fill="#4f46e5"/>
<rect x="560.79" y="301.23" width="5.9" height="31.47" rx="2.4" fill="#10b981"/>
<rect x="560.79" y="329.70" width="5.9" height="3" fill="#10b981"/>
<text x="560.69" y="344.60" font-family="Liberation Sans" font-size="5.6" fill="#373d3f" text-anchor="middle">Jul</text>
<rect x="587.77" y="274.49" width="5.9" height="58.21" rx="2.4" fill="#4f46e5"/>
<rect x="587.77" y="329.70" width="5.9" height="3" fill="#4f46e5"/>
<rect x="594.67" y="309.49" width="5.9" height="23.21" rx="2.4" fill="#10b981"/>
<rect x="594.67" y="329.70" width="5.9" height="3" fill="#10b981"/>
<text x="594.57" y="344.60" font-family="Liberation Sans" font-size="5.6" fill="#373d3f" text-anchor="middle">Aug</text>
<rect x="621.65" y="277.24" width="5.9" height="55.46" rx="2.4" fill="#4f46e5"/>
<rect x="621.65" y="329.70" width="5.9" height="3" fill="#4f46e5"/>
<rect x="628.55" y="287.96" width="5.9" height="44.74" rx="2.4" fill="#10b981"/>
<rect x="628.55" y="329.70" width="5.9" height="3" fill="#10b981"/>
<text x="628.45" y="344.60" font-family="Liberation Sans" font-size="5.6" fill="#373d3f" text-anchor="middle">Sep</text>
<rect x="655.54" y="250.30" width="5.9" height="82.40" rx="2.4" fill="#4f46e5"/>
<rect x="655.54" y="329.70" width="5.9" height="3" fill="#4f46e5"/>
<rect x="662.44" y="312.25" width="5.9" height="20.45" rx="2.4" fill="#10b981"/>
<rect x="662.44" y="329.70" width="5.9" height="3" fill="#10b981"/>
<text x="662.34" y="344.60" font-family="Liberation Sans" font-size="5.6" fill="#373d3f" text-anchor="middle">Oct</text>
<rect x="689.42" y="241.45" width="5.9" height="91.25" rx="2.4" fill="#4f46e5"/>
<rect x="689.42" y="329.70" width="5.9" height="3" fill="#4f46e5"/>
<rect x="696.32" y="289.24" width="5.9" height="43.46" rx="2.4" fill="#10b981"/>
<rect x="696.32" y="329.70" width="5.9" height="3" fill="#10b981"/>
<text x="696.22" y="344.60" font-family="Liberation Sans" font-size="5.6" fill="#373d3f" text-anchor="middle">Nov</text>
<rect x="723.30" y="221.19" width="5.9" height="111.51" rx="2.4" fill="#4f46e5"/>
<rect x="723.30" y="329.70" width="5.9" height="3" fill="#4f46e5"/>
<rect x="730.20" y="256.69" width="5.9" height="76.01" rx="2.4" fill="#10b981"/>
<rect x="730.20" y="329.70" width="5.9" height="3" fill="#10b981"/>
<text x="730.10" y="344.60" font-family="Liberation Sans" font-size="5.6" fill="#373d3f" text-anchor="middle">Dec</text>
<text transform="translate(319.7,270.3) rotate(-90)" font-family="Liberation Sans" font-size="7.3" fill="#373d3f" text-anchor="middle">Profit / Expenses (USD)</text>
<rect x="499.9" y="352.6" width="5.2" height="3.4" rx="1" fill="#4f46e5"/>
<text x="506.6" y="356.4" font-family="Liberation Sans" font-size="6.2" fill="#373d3f">Profit</text>
<rect x="527" y="352.6" width="5.2" height="3.4" rx="1" fill="#10b981"/>
<text x="533.6" y="356.4" font-family="Liberation Sans" font-size="6.2" fill="#373d3f">Expenses</text>
</svg>
<div class="card" style="left:775px;top:161.7px;width:227px;height:208.3px"></div>
<div class="abs t" style="left:786.2px;top:175.10px;line-height:12px;font-size:8.22px;color:#1f2937;-webkit-text-stroke:0.18px #1f2937;">Customers by Country</div>
<div class="circ" style="left:976px;top:172.9px;width:14.6px;height:14.6px;background:#f1f5f9"></div>
<svg class="abs" style="left:982.3px;top:177px" width="2" height="7" viewBox="0 0 2 7" fill="#1f2937"><circle cx="1" cy="1" r=".8"/><circle cx="1" cy="3.5" r=".8"/><circle cx="1" cy="6" r=".8"/></svg>
<div class="abs" style="left:775px;top:198px;width:227px;height:1px;background:#f3f5f8"></div>
<svg class="abs" style="left:0;top:0" width="1175" height="594" viewBox="0 0 1175 594">
<polygon points="787.7,229.2 791.6,227.6 801.3,228 806,226.5 811,224.4 818,219 828.4,213.7 836,213.2 843.9,214.7 846.8,224.4 843.9,234 849.7,245.7 843.9,251.5 838.1,257.3 836,262 832.3,261.2 829,260 824.5,263.1 829,266 834.2,270.8 832,271.5 828.4,267 822,264 818.7,261.2 812,251.5 811,243.7 805,242.5 799.4,241.8 795,240 791.6,237.9 787.7,232.1" fill="#dfe2e8" stroke="#dfe2e8" stroke-width="0.8" stroke-linejoin="round"/>
<polygon points="842,215.6 852,213.2 873,213.7 872,220 871,224.4 866,230 861.3,234 853.6,236 851,230 849.7,224.4 846,219" fill="#dfe2e8" stroke="#dfe2e8" stroke-width="0.8" stroke-linejoin="round"/>
<polygon points="836.2,271.8 842,271.5 847.8,272.8 855,276 861.3,280.5 859,285 857.5,288.3 853,292 849.7,298 846,304 842,311.5 840.5,309 840,305.7 840,297 840,290.2 838,286 836.2,282.5 834.5,276" fill="#dfe2e8" stroke="#dfe2e8" stroke-width="0.8" stroke-linejoin="round"/>
<polygon points="876,252 875,247 878,244 881,240 884,238 886,234 889,236 891,232 888,229 892,224 898,221 904,222 902,226 906,229 912,226 920,224 930,223 938.1,221.5 950,222 961.3,223.4 971,226.3 980,229 988.4,232.1 980.7,234 975,236 971,237.9 972.9,243.7 968,246 963.3,247.6 961.3,255.3 957,259 953.6,263.1 948,266 945.8,268.9 942,270.8 938.1,278.6 935,272 932.3,268.9 926.5,270.8 923,266 920.7,261.1 916,262 911,263.1 905.2,267 902,261 899.5,257 897,253.5 890,253 886,251.5 884,253.5 880,250.5 878,252.5" fill="#dfe2e8" stroke="#dfe2e8" stroke-width="0.8" stroke-linejoin="round"/>
<polygon points="872,257.5 880,255.2 889,255.8 897,257.8 901.3,259.8 904,264 907.1,268.9 909,274.7 907,278 905.2,282.4 902,288 899.4,294 895,296.5 893.6,296 891,290 889.7,282.4 888.5,276 887.7,270.8 880,270.8 876,268 871,265 870.5,261" fill="#dfe2e8" stroke="#dfe2e8" stroke-width="0.8" stroke-linejoin="round"/>
<polygon points="865,227 869,225.5 871,227.5 867,229" fill="#dfe2e8" stroke="#dfe2e8" stroke-width="0.8" stroke-linejoin="round"/>
<polygon points="878,235 881.5,232 883,238 879,240.5" fill="#dfe2e8" stroke="#dfe2e8" stroke-width="0.8" stroke-linejoin="round"/>
<polygon points="947.8,288.3 954,285.5 961.3,284.4 966,287 969,290.2 968.5,295 967.1,298 962,299.5 957.4,299.9 952,297.5 947.8,296" fill="#dfe2e8" stroke="#dfe2e8" stroke-width="0.8" stroke-linejoin="round"/>
<polygon points="935,276 940,275 944,278 939,279" fill="#dfe2e8" stroke="#dfe2e8" stroke-width="0.8" stroke-linejoin="round"/>
<polygon points="946,278 953,277 956,280 948,281" fill="#dfe2e8" stroke="#dfe2e8" stroke-width="0.8" stroke-linejoin="round"/>
<polygon points="957,274 962,273 964,276 958,277" fill="#dfe2e8" stroke="#dfe2e8" stroke-width="0.8" stroke-linejoin="round"/>
<polygon points="969,246 972,243 973.5,249 970,256 967,255" fill="#dfe2e8" stroke="#dfe2e8" stroke-width="0.8" stroke-linejoin="round"/>
<polygon points="906,285 908,283 907.5,291 905,291" fill="#dfe2e8" stroke="#dfe2e8" stroke-width="0.8" stroke-linejoin="round"/>
<polygon points="981,300 983,298 982,305 979,306" fill="#dfe2e8" stroke="#dfe2e8" stroke-width="0.8" stroke-linejoin="round"/>
<polygon points="812,216 822,212 828,214 818,219" fill="#dfe2e8" stroke="#dfe2e8" stroke-width="0.8" stroke-linejoin="round"/>
<polygon points="884,215 892,213 894,217 886,218" fill="#dfe2e8" stroke="#dfe2e8" stroke-width="0.8" stroke-linejoin="round"/>
<polygon points="940,214 950,213 948,217 940,217" fill="#dfe2e8" stroke="#dfe2e8" stroke-width="0.8" stroke-linejoin="round"/>
<polygon points="832,229 838,228.5 842,231 843,236 840,240 835,241 832,236" fill="#fff"/>
<polygon points="818,221 826,219 830,222 822,224" fill="#fff"/>
<polygon points="898,247.5 905,246.5 906,249.5 899,250" fill="#fff"/>
<polygon points="910,246 913,245.5 913.5,252 910.5,252" fill="#fff"/>
<circle cx="820.7" cy="241.3" r="2.6" fill="#4f46e5" stroke="#fff" stroke-width="0.5"/>
<text x="826.7" y="243.3" font-family="Liberation Sans" font-size="6.4" fill="#374151" stroke="#fff" stroke-width="1.4" paint-order="stroke">Canada</text>
<circle cx="857.4" cy="226.9" r="2.6" fill="#4f46e5" stroke="#fff" stroke-width="0.5"/>
<text x="863.4" y="228.9" font-family="Liberation Sans" font-size="6.4" fill="#374151" stroke="#fff" stroke-width="1.4" paint-order="stroke">Greenland</text>
<circle cx="941.1" cy="236.5" r="2.6" fill="#059669" stroke="#fff" stroke-width="0.5"/>
<text x="947.1" y="238.5" font-family="Liberation Sans" font-size="6.4" fill="#374151" stroke="#fff" stroke-width="1.4" paint-order="stroke">Russia</text>
<circle cx="901.5" cy="258.3" r="2.6" fill="#059669" stroke="#fff" stroke-width="0.5"/>
<text x="907.5" y="260.3" font-family="Liberation Sans" font-size="6.4" fill="#374151" stroke="#fff" stroke-width="1.4" paint-order="stroke">Palestine</text>
</svg>
<div class="abs" style="left:775px;top:326px;width:227px;height:1px;background:#f3f5f8"></div>
<div class="abs t" style="left:786.2px;top:338.30px;line-height:10px;font-size:7.45px;color:#4f46e5;-webkit-text-stroke:0.12px #4f46e5;">Canada:</div>
<div class="abs t" style="left:816.2px;top:338.30px;line-height:10px;font-size:7.4px;color:#94a3b8;">12468</div>
<div class="abs t" style="left:786.2px;top:349.40px;line-height:10px;font-size:7.45px;color:#4f46e5;-webkit-text-stroke:0.12px #4f46e5;">Russia:</div>
<div class="abs t" style="left:813.2px;top:349.40px;line-height:10px;font-size:7.4px;color:#94a3b8;">12468</div>
<div class="abs t" style="left:887.8px;top:338.30px;line-height:10px;font-size:7.45px;color:#4f46e5;-webkit-text-stroke:0.12px #4f46e5;">Greenland:</div>
<div class="abs t" style="left:926.8px;top:338.30px;line-height:10px;font-size:7.4px;color:#94a3b8;">12468</div>
<div class="abs t" style="left:887.8px;top:349.40px;line-height:10px;font-size:7.45px;color:#4f46e5;-webkit-text-stroke:0.12px #4f46e5;">Palestine:</div>
<div class="abs t" style="left:924.3px;top:349.40px;line-height:10px;font-size:7.4px;color:#94a3b8;">12468</div>
<div class="card" style="left:301.5px;top:380.8px;width:286.5px;height:200px"></div>
<div class="abs t" style="left:312.8px;top:393.30px;line-height:12px;font-size:8.2px;color:#1f2937;-webkit-text-stroke:0.12px #1f2937;">Orders</div>
<div class="abs t" style="left:524.6px;top:394.10px;line-height:10px;font-size:7.9px;color:#94a3b8;">View orders</div>
<svg class="abs" style="left:569.5px;top:396.3px" width="5" height="5" viewBox="0 0 6 6" fill="none" stroke="#94a3b8" stroke-width="1" stroke-linecap="round" stroke-linejoin="round"><path d="M0.6 3h4.6M3.2 1l2 2-2 2"/></svg>
<div class="abs" style="left:302px;top:415.1px;width:285px;height:1px;background:#f3f5f8"></div>
<div class="abs t" style="left:308.9px;top:423.70px;line-height:10px;font-size:6.8px;color:#1f2937;-webkit-text-stroke:0.16px #1f2937;">No.</div>
<div class="abs t" style="left:353.8px;top:423.70px;line-height:10px;font-size:6.8px;color:#1f2937;-webkit-text-stroke:0.16px #1f2937;">ID</div>
<div class="abs t" style="left:411.8px;top:423.70px;line-height:10px;font-size:6.8px;color:#1f2937;-webkit-text-stroke:0.16px #1f2937;">Date</div>
<div class="abs t" style="left:478.2px;top:423.70px;line-height:10px;font-size:6.8px;color:#1f2937;-webkit-text-stroke:0.16px #1f2937;">Price</div>
<div class="abs t" style="right:595.4px;top:423.70px;line-height:10px;font-size:6.8px;color:#1f2937;-webkit-text-stroke:0.16px #1f2937;text-align:right;">Status</div>
<div class="abs" style="left:302px;top:441.3px;width:285px;height:1px;background:#f3f5f8"></div>
<div class="abs t" style="left:308.9px;top:450.30px;line-height:10px;font-size:7.5px;color:#1f2937;-webkit-text-stroke:0.12px #1f2937;">01</div>
<div class="abs t" style="left:354.3px;top:450.30px;line-height:10px;font-size:7.8px;color:#1f2937;-webkit-text-stroke:0.12px #1f2937;">#tw001</div>
<div class="abs t" style="left:412.5px;top:450.30px;line-height:10px;font-size:7.6px;color:#94a3b8;">10th Aug 2023</div>
<div class="abs t" style="left:478.2px;top:450.30px;line-height:10px;font-size:7.7px;color:#94a3b8;">$253</div>
<div class="abs" style="left:545.0px;top:450.40000000000003px;width:34.9px;height:9.8px;border-radius:2.5px;background:#dcf5ea"></div>
<div class="abs t" style="left:544.9999999999999px;width:34.9px;text-align:center;top:450.80px;line-height:9px;font-size:5.5px;color:#059669;font-weight:bold;">Delivered</div>
<div class="abs" style="left:302px;top:467.1px;width:285px;height:1px;background:#f3f5f8"></div>
<div class="abs t" style="left:308.9px;top:476.10px;line-height:10px;font-size:7.5px;color:#1f2937;-webkit-text-stroke:0.12px #1f2937;">02</div>
<div class="abs t" style="left:354.3px;top:476.10px;line-height:10px;font-size:7.8px;color:#1f2937;-webkit-text-stroke:0.12px #1f2937;">#tw002</div>
<div class="abs t" style="left:412.5px;top:476.10px;line-height:10px;font-size:7.6px;color:#94a3b8;">13th Aug 2023</div>
<div class="abs t" style="left:478.2px;top:476.10px;line-height:10px;font-size:7.7px;color:#94a3b8;">$123</div>
<div class="abs" style="left:542.3px;top:476.20000000000005px;width:37.6px;height:9.8px;border-radius:2.5px;background:#e9e8fd"></div>
<div class="abs t" style="left:542.3000000000001px;width:37.6px;text-align:center;top:476.60px;line-height:9px;font-size:5.5px;color:#4f46e5;font-weight:bold;">New Order</div>
<div class="abs" style="left:302px;top:492.90000000000003px;width:285px;height:1px;background:#f3f5f8"></div>
<div class="abs t" style="left:308.9px;top:501.90px;line-height:10px;font-size:7.5px;color:#1f2937;-webkit-text-stroke:0.12px #1f2937;">03</div>
<div class="abs t" style="left:354.3px;top:501.90px;line-height:10px;font-size:7.8px;color:#1f2937;-webkit-text-stroke:0.12px #1f2937;">#tw003</div>
<div class="abs t" style="left:412.5px;top:501.90px;line-height:10px;font-size:7.6px;color:#94a3b8;">18th Aug 2023</div>
<div class="abs t" style="left:478.2px;top:501.90px;line-height:10px;font-size:7.7px;color:#94a3b8;">$245</div>
<div class="abs" style="left:552.5px;top:502.00000000000006px;width:27.4px;height:9.8px;border-radius:2.5px;background:#fde8e8"></div>
<div class="abs t" style="left:552.4999999999999px;width:27.4px;text-align:center;top:502.40px;line-height:9px;font-size:5.5px;color:#dc2626;font-weight:bold;">Return</div>
<div class="abs" style="left:302px;top:518.7px;width:285px;height:1px;background:#f3f5f8"></div>
<div class="abs t" style="left:308.9px;top:527.70px;line-height:10px;font-size:7.5px;color:#1f2937;-webkit-text-stroke:0.12px #1f2937;">04</div>
<div class="abs t" style="left:354.3px;top:527.70px;line-height:10px;font-size:7.8px;color:#1f2937;-webkit-text-stroke:0.12px #1f2937;">#tw004</div>
<div class="abs t" style="left:412.5px;top:527.70px;line-height:10px;font-size:7.6px;color:#94a3b8;">21st Aug 2023</div>
<div class="abs t" style="left:478.2px;top:527.70px;line-height:10px;font-size:7.7px;color:#94a3b8;">$157</div>
<div class="abs" style="left:553.0px;top:527.8000000000001px;width:26.9px;height:9.8px;border-radius:2.5px;background:#f1f3f6"></div>
<div class="abs t" style="left:552.9999999999999px;width:26.9px;text-align:center;top:528.20px;line-height:9px;font-size:5.5px;color:#374151;font-weight:bold;">Cancel</div>
<div class="card" style="left:598px;top:380.8px;width:226px;height:200px"></div>
<svg class="abs" style="left:0;top:0" width="1175" height="594" viewBox="0 0 1175 594">
<polygon points="674.8,495.4 691.7,463.8 730,463.8 746.3,495.4 730,525.8 691.7,525.8" fill="#f4f4fd"/>
<g fill="#fff"><polygon points="695,470.5 706,470.5 702,478 691,478"/><polygon points="683,487.5 712,487.5 714,491 681.5,491"/><polygon points="681.5,499.5 714,499.5 712,503 683,503"/><polygon points="691,512.5 702,512.5 706,520 695,520"/></g>
<polyline points="729,471 716.5,495.4 729,520" stroke="#fff" stroke-width="3.6" fill="none"/>
</svg>
<svg class="abs" style="left:604.9px;top:388.6px" width="20" height="20" viewBox="0 0 20 20">
<defs><clipPath id="cm61493986"><circle cx="10" cy="10" r="10"/></clipPath></defs>
<g clip-path="url(#cm61493986)"><rect width="20" height="20" fill="#dedfe1"/>
<path d="M1.5 20 C1.8 16 4.8 14.2 10 14 C15.2 14.2 18.2 16 18.5 20 Z" fill="#66758b"/>
<path d="M8.3 14 L10 19.5 L11.7 14 Z" fill="#f0f0f0"/>
<rect x="8.6" y="11.8" width="2.8" height="2.6" fill="#b98b70"/>
<ellipse cx="10" cy="8.4" rx="3.7" ry="4.4" fill="#c99a7e"/>
<path d="M6.1 7.8 C5.8 3.8 7.6 2.6 10 2.6 C12.4 2.6 14.2 3.8 13.9 7.8 C13.2 5.9 6.8 5.9 6.1 7.8Z" fill="#32241d"/>
<path d="M6.3 9.2 C6.5 12.8 8.3 13.6 10 13.6 C11.7 13.6 13.5 12.8 13.7 9.2 C12.8 10.9 7.2 10.9 6.3 9.2Z" fill="#4a372c"/>
<path d="M6.6 8.2h2.8M10.6 8.2h2.8" stroke="#1d1d1d" stroke-width="0.7"/>
</g></svg>
<div class="abs t" style="left:630.2px;top:388.80px;line-height:10px;font-size:7.3px;color:#1f2937;-webkit-text-stroke:0.2px #1f2937;">Calvin Carlo</div>
<div class="circ" style="left:630.1px;top:402.3px;width:3.5px;height:3.5px;background:#16a34a"></div>
<div class="abs t" style="left:635.9px;top:399.60px;line-height:9px;font-size:6.3px;color:#94a3b8;">Online</div>
<div class="circ" style="left:801.7px;top:391.3px;width:14.6px;height:14.6px;background:#f1f5f9"></div>
<svg class="abs" style="left:808px;top:395.2px" width="2" height="7" viewBox="0 0 2 7" fill="#1f2937"><circle cx="1" cy="1" r=".8"/><circle cx="1" cy="3.5" r=".8"/><circle cx="1" cy="6" r=".8"/></svg>
<div class="abs" style="left:598px;top:415.2px;width:225px;height:1px;background:#f3f5f8"></div>
<svg class="abs" style="left:604.95px;top:422.85px" width="16.5" height="16.5" viewBox="0 0 20 20">
<defs><clipPath id="cm61324311"><circle cx="10" cy="10" r="10"/></clipPath></defs>
<g clip-path="url(#cm61324311)"><rect width="20" height="20" fill="#dedfe1"/>
<path d="M1.5 20 C1.8 16 4.8 14.2 10 14 C15.2 14.2 18.2 16 18.5 20 Z" fill="#66758b"/>
<path d="M8.3 14 L10 19.5 L11.7 14 Z" fill="#f0f0f0"/>
<rect x="8.6" y="11.8" width="2.8" height="2.6" fill="#b98b70"/>
<ellipse cx="10" cy="8.4" rx="3.7" ry="4.4" fill="#c99a7e"/>
<path d="M6.1 7.8 C5.8 3.8 7.6 2.6 10 2.6 C12.4 2.6 14.2 3.8 13.9 7.8 C13.2 5.9 6.8 5.9 6.1 7.8Z" fill="#32241d"/>
<path d="M6.3 9.2 C6.5 12.8 8.3 13.6 10 13.6 C11.7 13.6 13.5 12.8 13.7 9.2 C12.8 10.9 7.2 10.9 6.3 9.2Z" fill="#4a372c"/>
<path d="M6.6 8.2h2.8M10.6 8.2h2.8" stroke="#1d1d1d" stroke-width="0.7"/>
</g></svg><div class="circ" style="left:605px;top:423px;width:6px;height:6px;background:#16a34a;border:1px solid #fff"></div>
<div class="abs" style="left:624.3px;top:422.3px;width:46.6px;height:17.3px;border:1px solid #eef1f5;border-radius:3px;background:#fff"></div>
<div class="abs t" style="left:630.2px;top:426.80px;line-height:9px;font-size:6.3px;color:#94a3b8;">Hey Cristina</div>
<svg class="abs" style="left:625.1px;top:443.8px" width="5.8" height="5.8" viewBox="0 0 12 12" fill="none" stroke="#94a3b8" stroke-width="1.3" stroke-linecap="round"><circle cx="6" cy="6" r="4.8"/><path d="M6 3.5V6l1.8 1.4"/></svg>
<div class="abs t" style="left:632.7px;top:442.30px;line-height:9px;font-size:6.4px;color:#94a3b8;">59 min ago</div>
<svg class="abs" style="left:800.35px;top:457.05px" width="16.3" height="16.3" viewBox="0 0 14 14">
<defs><clipPath id="cf808465"><circle cx="7" cy="7" r="7"/></clipPath></defs>
<g clip-path="url(#cf808465)"><rect width="14" height="14" fill="#eceef0"/>
<path d="M4.5 11.2 C4.1 6.2 4.4 2.2 7 2.2 C9.6 2.2 9.9 6.2 9.5 11.2 Z" fill="#2a1c17"/>
<ellipse cx="7" cy="5.9" rx="1.75" ry="2.4" fill="#e3b99d"/>
<path d="M5.5 5.6h1.1M7.4 5.6h1.1" stroke="#553" stroke-width="0.35"/>
<path d="M1.3 14 C1.8 10.9 4 9.6 7 9.6 C10 9.6 12.2 10.9 12.7 14 Z" fill="#94c5ee"/>
</g></svg><div class="circ" style="left:810px;top:457px;width:6px;height:6px;background:#16a34a;border:1px solid #fff"></div>
<div class="abs" style="left:751.2px;top:456.7px;width:45.5px;height:17.6px;border:1px solid #eef1f5;border-radius:3px;background:#fff"></div>
<div class="abs t" style="left:756.7px;top:461.00px;line-height:9px;font-size:6.45px;color:#94a3b8;">Hello Calvin</div>
<svg class="abs" style="left:757px;top:478.0px" width="5.8" height="5.8" viewBox="0 0 12 12" fill="none" stroke="#94a3b8" stroke-width="1.3" stroke-linecap="round"><circle cx="6" cy="6" r="4.8"/><path d="M6 3.5V6l1.8 1.4"/></svg>
<div class="abs t" style="left:764.7px;top:476.50px;line-height:9px;font-size:6.45px;color:#94a3b8;">45 min ago</div>
<svg class="abs" style="left:800.35px;top:491.75px" width="16.3" height="16.3" viewBox="0 0 14 14">
<defs><clipPath id="cf808499"><circle cx="7" cy="7" r="7"/></clipPath></defs>
<g clip-path="url(#cf808499)"><rect width="14" height="14" fill="#eceef0"/>
<path d="M4.5 11.2 C4.1 6.2 4.4 2.2 7 2.2 C9.6 2.2 9.9 6.2 9.5 11.2 Z" fill="#2a1c17"/>
<ellipse cx="7" cy="5.9" rx="1.75" ry="2.4" fill="#e3b99d"/>
<path d="M5.5 5.6h1.1M7.4 5.6h1.1" stroke="#553" stroke-width="0.35"/>
<path d="M1.3 14 C1.8 10.9 4 9.6 7 9.6 C10 9.6 12.2 10.9 12.7 14 Z" fill="#94c5ee"/>
</g></svg><div class="circ" style="left:810px;top:492px;width:6px;height:6px;background:#16a34a;border:1px solid #fff"></div>
<div class="abs" style="left:728.8px;top:491.9px;width:67.9px;height:16.4px;border:1px solid #eef1f5;border-radius:3px;background:#fff"></div>
<div class="abs t" style="left:734.7px;top:494.70px;line-height:9px;font-size:6.26px;color:#94a3b8;">How can i help you?</div>
<svg class="abs" style="left:757px;top:512.1px" width="5.8" height="5.8" viewBox="0 0 12 12" fill="none" stroke="#94a3b8" stroke-width="1.3" stroke-linecap="round"><circle cx="6" cy="6" r="4.8"/><path d="M6 3.5V6l1.8 1.4"/></svg>
<div class="abs t" style="left:764.7px;top:510.60px;line-height:9px;font-size:6.45px;color:#94a3b8;">44 min ago</div>
<svg class="abs" style="left:604.95px;top:525.75px" width="16.5" height="16.5" viewBox="0 0 20 20">
<defs><clipPath id="cm61325340"><circle cx="10" cy="10" r="10"/></clipPath></defs>
<g clip-path="url(#cm61325340)"><rect width="20" height="20" fill="#dedfe1"/>
<path d="M1.5 20 C1.8 16 4.8 14.2 10 14 C15.2 14.2 18.2 16 18.5 20 Z" fill="#66758b"/>
<path d="M8.3 14 L10 19.5 L11.7 14 Z" fill="#f0f0f0"/>
<rect x="8.6" y="11.8" width="2.8" height="2.6" fill="#b98b70"/>
<ellipse cx="10" cy="8.4" rx="3.7" ry="4.4" fill="#c99a7e"/>
<path d="M6.1 7.8 C5.8 3.8 7.6 2.6 10 2.6 C12.4 2.6 14.2 3.8 13.9 7.8 C13.2 5.9 6.8 5.9 6.1 7.8Z" fill="#32241d"/>
<path d="M6.3 9.2 C6.5 12.8 8.3 13.6 10 13.6 C11.7 13.6 13.5 12.8 13.7 9.2 C12.8 10.9 7.2 10.9 6.3 9.2Z" fill="#4a372c"/>
<path d="M6.6 8.2h2.8M10.6 8.2h2.8" stroke="#1d1d1d" stroke-width="0.7"/>
</g></svg><div class="circ" style="left:605px;top:526px;width:6px;height:6px;background:#16a34a;border:1px solid #fff"></div>
<div class="abs" style="left:624.3px;top:525.2px;width:59px;height:17.3px;border:1px solid #eef1f5;border-radius:3px;background:#fff"></div>
<div class="abs t" style="left:630.2px;top:529.70px;line-height:9px;font-size:6.3px;color:#94a3b8;">Nice to meet you</div>
<div class="card" style="left:834px;top:380.8px;width:168px;height:200px"></div>
<div class="abs t" style="left:845.4px;top:393.40px;line-height:12px;font-size:8.26px;color:#1f2937;-webkit-text-stroke:0.18px #1f2937;">Top Products / Items</div>
<svg class="abs" style="left:983.5px;top:395px" width="5" height="7" viewBox="0 0 5 7" fill="none" stroke="#8391a7" stroke-width="0.7" stroke-linecap="round"><path d="M1.3 6V1M0.3 2L1.3 1 2.3 2M3.7 1.2v5M2.7 5.2l1 1 1-1"/></svg>
<div class="abs" style="left:834px;top:415.4px;width:167px;height:1px;background:#f3f5f8"></div>
<div class="abs t" style="left:841.9px;top:423.70px;line-height:10px;font-size:6.84px;color:#1f2937;-webkit-text-stroke:0.22px #1f2937;">Products</div>
<div class="abs t" style="left:913.9px;top:423.70px;line-height:10px;font-size:6.76px;color:#1f2937;-webkit-text-stroke:0.22px #1f2937;">Earnings</div>
<div class="abs t" style="right:181.10000000000002px;top:423.70px;line-height:10px;font-size:6.72px;color:#1f2937;-webkit-text-stroke:0.22px #1f2937;text-align:right;">Progress</div>
<div class="abs" style="left:834px;top:441.4px;width:167px;height:1px;background:#f3f5f8"></div>
<div class="abs t" style="left:841.9px;top:449.80px;line-height:10px;font-size:7.4px;color:#1f2937;-webkit-text-stroke:0.12px #1f2937;">Techwind</div>
<div class="abs t" style="left:913.9px;top:449.80px;line-height:10px;font-size:7.8px;color:#1f2937;-webkit-text-stroke:0.08px #1f2937;">$4120</div>
<div class="abs t" style="right:181.10000000000002px;top:449.80px;line-height:10px;font-size:6.6px;color:#16a34a;text-align:right;">5.5%</div>
<svg class="abs" style="left:971.9px;top:452.29999999999995px" width="5.5" height="5" viewBox="0 0 7 7" fill="none" stroke="#16a34a" stroke-width="1.1" stroke-linecap="round" stroke-linejoin="round"><path d="M0.5 5.5l2-2 1 1 3-3M6.5 3.5v-2H4.5"/></svg>
<div class="abs" style="left:834px;top:466.95px;width:167px;height:1px;background:#f3f5f8"></div>
<div class="abs t" style="left:841.9px;top:475.35px;line-height:10px;font-size:7.4px;color:#1f2937;-webkit-text-stroke:0.12px #1f2937;">Landrick</div>
<div class="abs t" style="left:913.9px;top:475.35px;line-height:10px;font-size:7.8px;color:#1f2937;-webkit-text-stroke:0.08px #1f2937;">$5648</div>
<div class="abs t" style="right:181.10000000000002px;top:475.35px;line-height:10px;font-size:6.6px;color:#dc2626;text-align:right;">15.8%</div>
<svg class="abs" style="left:968.3px;top:477.84999999999997px" width="5.5" height="5" viewBox="0 0 7 7" fill="none" stroke="#dc2626" stroke-width="1.1" stroke-linecap="round" stroke-linejoin="round"><path d="M0.5 1.5l2 2 1-1 3 3M6.5 3.5v2H4.5"/></svg>
<div class="abs" style="left:834px;top:492.5px;width:167px;height:1px;background:#f3f5f8"></div>
<div class="abs t" style="left:841.9px;top:500.90px;line-height:10px;font-size:7.4px;color:#1f2937;-webkit-text-stroke:0.12px #1f2937;">Hously</div>
<div class="abs t" style="left:913.9px;top:500.90px;line-height:10px;font-size:7.8px;color:#1f2937;-webkit-text-stroke:0.08px #1f2937;">$456</div>
<div class="abs t" style="right:181.10000000000002px;top:500.90px;line-height:10px;font-size:6.6px;color:#16a34a;text-align:right;">1.3%</div>
<svg class="abs" style="left:971.9px;top:503.4px" width="5.5" height="5" viewBox="0 0 7 7" fill="none" stroke="#16a34a" stroke-width="1.1" stroke-linecap="round" stroke-linejoin="round"><path d="M0.5 5.5l2-2 1 1 3-3M6.5 3.5v-2H4.5"/></svg>
<div class="abs" style="left:834px;top:518.05px;width:167px;height:1px;background:#f3f5f8"></div>
<div class="abs t" style="left:841.9px;top:526.45px;line-height:10px;font-size:7.4px;color:#1f2937;-webkit-text-stroke:0.12px #1f2937;">Jobstack</div>
<div class="abs t" style="left:913.9px;top:526.45px;line-height:10px;font-size:7.8px;color:#1f2937;-webkit-text-stroke:0.08px #1f2937;">$546</div>
<div class="abs t" style="right:181.10000000000002px;top:526.45px;line-height:10px;font-size:6.6px;color:#dc2626;text-align:right;">1.54%</div>
<svg class="abs" style="left:968.3px;top:528.9499999999999px" width="5.5" height="5" viewBox="0 0 7 7" fill="none" stroke="#dc2626" stroke-width="1.1" stroke-linecap="round" stroke-linejoin="round"><path d="M0.5 1.5l2 2 1-1 3 3M6.5 3.5v2H4.5"/></svg></div></div>
<div id="edge"></div>
</body></html>
